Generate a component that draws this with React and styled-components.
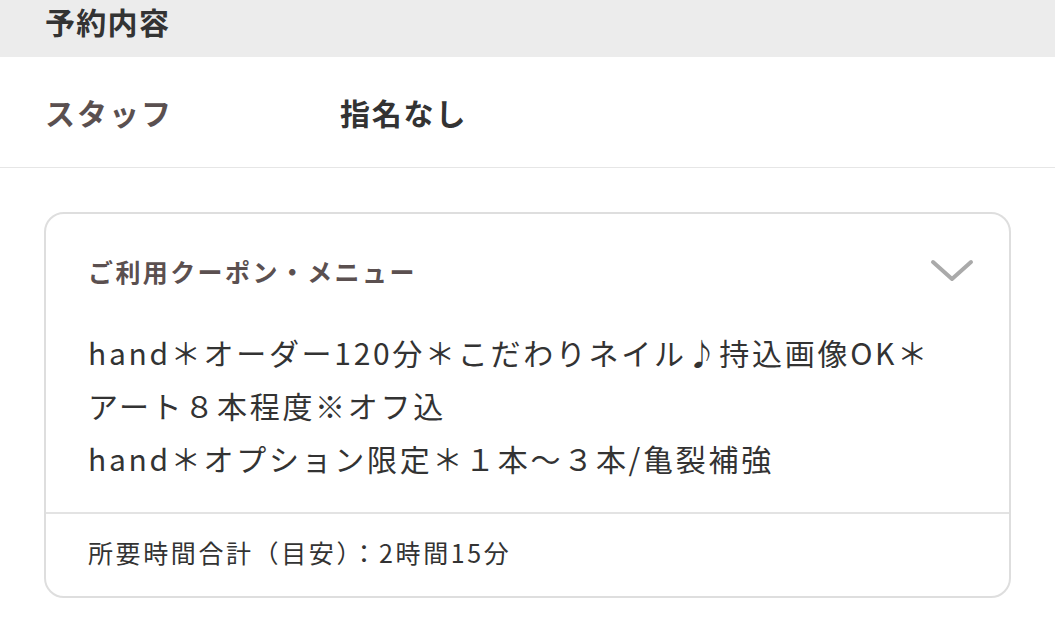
import React from "react";
import styled, { createGlobalStyle } from "styled-components";

const Global = createGlobalStyle`
  html, body { margin: 0; padding: 0; background: #fff; }
  body { font-family: "Noto Sans CJK JP", "Noto Sans", sans-serif; -webkit-font-smoothing: antialiased; }
`;

const Page = styled.div`
  width: 1055px;
  background: #fff;
`;

const SectionHeader = styled.div`
  height: 57px;
  background: #ececec;
  padding: 0 45px;
  box-sizing: border-box;
  font-size: 30px;
  font-weight: 700;
  line-height: 42px;
  color: #333;
  letter-spacing: 1.3px;
`;

const InfoRow = styled.div`
  display: flex;
  align-items: center;
  height: 111px;
  padding: 0 45px;
  box-sizing: border-box;
  border-bottom: 1px solid #e6e6e6;
`;

const InfoLabel = styled.div`
  width: 295px;
  font-size: 30px;
  font-weight: 700;
  color: #5a5050;
  letter-spacing: 2px;
`;

const InfoValue = styled.div`
  font-size: 30px;
  font-weight: 700;
  color: #333;
  letter-spacing: 1.8px;
`;

const CardWrap = styled.div`
  padding: 44px 44px 32px 44px;
`;

const Card = styled.div`
  border: 2px solid #dedede;
  border-radius: 20px;
  background: #fff;
`;

const CardBody = styled.div`
  padding: 42px 35px 27px 42px;
`;

const TitleRow = styled.div`
  display: flex;
  align-items: center;
  justify-content: space-between;
  height: 30px;
`;

const CardTitle = styled.div`
  font-size: 25px;
  font-weight: 700;
  color: #5b5050;
  letter-spacing: 2.4px;
  line-height: 30px;
`;

const Chevron = styled.svg`
  width: 44px;
  height: 26px;
  display: block;
`;

const MenuList = styled.div`
  margin-top: 40px;
`;

const MenuItem = styled.div`
  font-size: 30px;
  line-height: 53px;
  color: #333;
  letter-spacing: 2.7px;
`;

const CardFooter = styled.div`
  border-top: 2px solid #e3e3e3;
  padding: 20px 42px 26px 42px;
  font-size: 25px;
  line-height: 36px;
  color: #333;
  letter-spacing: 2.6px;
`;

export default function App() {
  return (
    <Page>
      <Global />
      <SectionHeader>予約内容</SectionHeader>
      <InfoRow>
        <InfoLabel>スタッフ</InfoLabel>
        <InfoValue>指名なし</InfoValue>
      </InfoRow>
      <CardWrap>
        <Card>
          <CardBody>
            <TitleRow>
              <CardTitle>ご利用クーポン・メニュー</CardTitle>
              <Chevron viewBox="0 0 44 26" aria-hidden="true">
                <polyline
                  points="3,4 22,21 41,4"
                  fill="none"
                  stroke="#aaaaaa"
                  strokeWidth="4"
                  strokeLinecap="round"
                  strokeLinejoin="round"
                />
              </Chevron>
            </TitleRow>
            <MenuList>
              <MenuItem>
                hand＊オーダー120分＊こだわりネイル♪持込画像OK＊
                <br />
                アート８本程度※オフ込
              </MenuItem>
              <MenuItem>hand＊オプション限定＊１本～３本/亀裂補強</MenuItem>
            </MenuList>
          </CardBody>
          <CardFooter>所要時間合計（目安）：2時間15分</CardFooter>
        </Card>
      </CardWrap>
    </Page>
  );
}
